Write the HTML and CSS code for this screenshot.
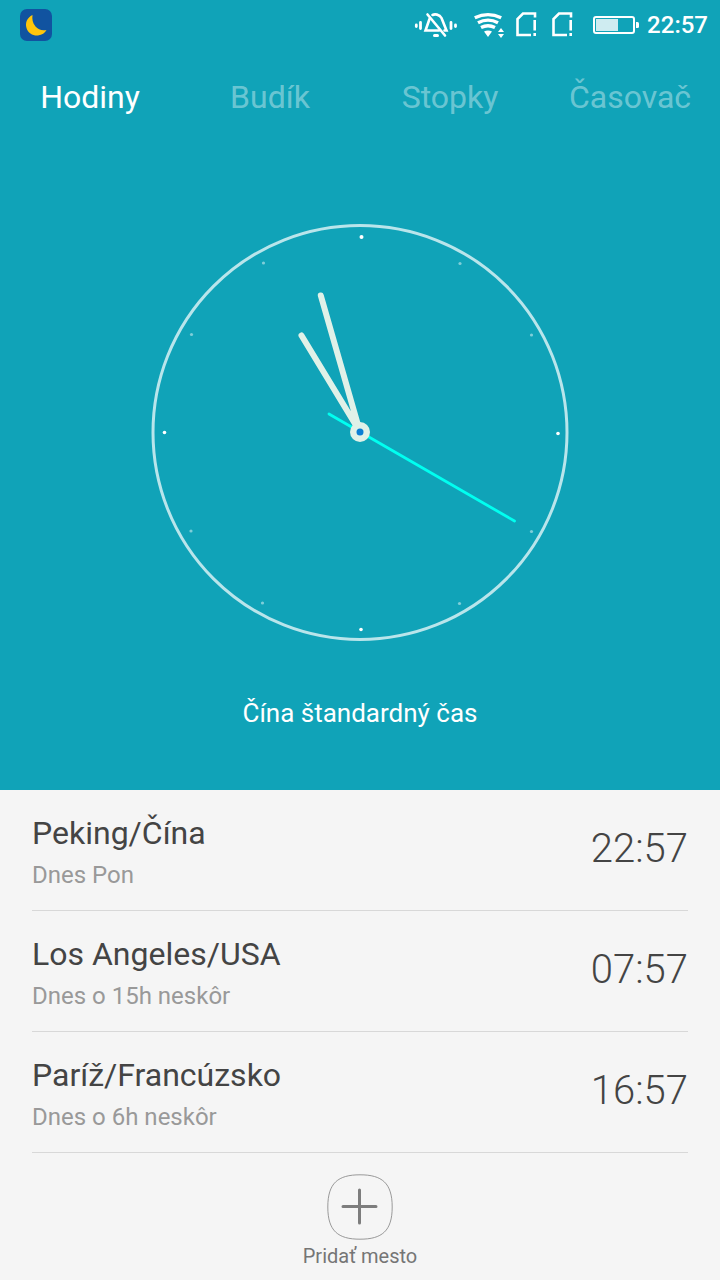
FILE: index.html
```html
<!DOCTYPE html>
<html lang="sk">
<head>
<meta charset="utf-8">
<meta name="viewport" content="width=device-width, initial-scale=1">
<title>Hodiny</title>
<link rel="stylesheet" href="styles.css">
</head>
<body>
<div class="app">
  <header class="hero">
    <div class="status">
      <svg class="status-app" width="32" height="32" viewBox="0 0 32 32" aria-hidden="true">
        <rect width="32" height="32" rx="7" fill="#1153a0"/>
        <path d="M12.500 6C7 8.500 5 14 6.500 19C8 24 13 27 18 26.500C22 26 25 24 26.500 21C22 22 18 20.500 15.500 17.500C12.500 14 12 10 12.500 6Z" fill="#ffc60b"/>
      </svg>
      <div class="status-icons">
        <svg class="silent" width="44" height="32" viewBox="414 9 44 32" fill="none" stroke="#fff" stroke-width="2.600" stroke-linecap="round" aria-hidden="true">
          <path d="M416.300 25v1.500M420.500 22.500v6M451 22.500v6M455.500 25v1.500" stroke-width="2.800"/>
          <path d="M429.500 19L425.500 30.500H439M432.500 15C434.500 14 439.500 14 441.500 18L446.500 30.500H444.500"/>
          <path d="M427.500 14.500L445 35.500"/>
          <path d="M434.500 35.500h3" stroke-width="3"/>
        </svg>
        <svg class="wifi" width="32" height="32" viewBox="473 9 32 32" fill="none" stroke="#fff" stroke-width="3.400" aria-hidden="true">
          <path d="M474.800 17.800Q488 11.500 501.200 17.800M478 22.800Q488 17.500 498 22.800M481 27.500Q488 24 495 27.500"/>
          <path d="M484 31.500Q488 29.500 492 31.500L488 37ZM501 28L504 32H498ZM501 38L504 34H498Z" fill="#fff" stroke="none"/>
        </svg>
        <svg class="sim" width="22" height="32" viewBox="515 9 22 32" fill="none" stroke="#fff" stroke-width="2.600" aria-hidden="true">
          <path d="M535 17.500V13.500H523L517.500 19V35H531M534.700 20V30.500M534.700 33V36"/>
        </svg>
        <svg class="sim" width="22" height="32" viewBox="515 9 22 32" fill="none" stroke="#fff" stroke-width="2.600" aria-hidden="true">
          <path d="M535 17.500V13.500H523L517.500 19V35H531M534.700 20V30.500M534.700 33V36"/>
        </svg>
        <svg class="battery" width="46" height="32" viewBox="593 9 46 32" aria-hidden="true">
          <rect x="594" y="17" width="40" height="16" rx="2" fill="none" stroke="#fff" stroke-width="2"/>
          <rect x="596" y="19" width="22" height="12" fill="#cfecf1"/>
          <path d="M636 22h1.500q1.500 0 1.500 1.500v3q0 1.500-1.500 1.500H636z" fill="#fff"/>
        </svg>
        <time class="status-time">22:57</time>
      </div>
    </div>
    <nav class="tabs">
      <button class="tab tab-active" type="button" aria-current="page">Hodiny</button>
      <button class="tab" type="button">Budík</button>
      <button class="tab" type="button">Stopky</button>
      <button class="tab" type="button">Časovač</button>
    </nav>
    <svg class="clock" viewBox="150 222 420 420" role="img" aria-label="22:57">
      <circle cx="360" cy="432.500" r="207" fill="none" stroke="#b9e5eb" stroke-width="3"/>
      <g fill="#fff">
        <circle cx="361.500" cy="237" r="2"/>
        <circle cx="558" cy="433.500" r="1.800"/>
        <circle cx="361" cy="629.500" r="1.800"/>
        <circle cx="164.500" cy="432.500" r="1.800"/>
      </g>
      <g fill="#7fced9">
        <circle cx="460" cy="263.500" r="1.600"/>
        <circle cx="531.500" cy="335" r="1.600"/>
        <circle cx="531.500" cy="531.500" r="1.600"/>
        <circle cx="459.500" cy="603.500" r="1.600"/>
        <circle cx="262.500" cy="603" r="1.600"/>
        <circle cx="191" cy="531" r="1.600"/>
        <circle cx="191.500" cy="334.500" r="1.600"/>
        <circle cx="263.500" cy="263" r="1.600"/>
      </g>
      <g stroke-linecap="round">
        <path d="M329 414L514.500 521" stroke="#00fff0" stroke-width="2.800"/>
        <path d="M360 432L301.500 335.500M360 432L320.800 295.500" stroke="#e0f1e8" stroke-width="6" fill="none"/>
      </g>
      <circle cx="360" cy="432" r="10" fill="#e0f1e8"/>
      <circle cx="360" cy="432" r="3.500" fill="#0b7fd4"/>
    </svg>
    <p class="zone">Čína štandardný čas</p>
  </header>
  <main class="panel">
    <ul class="cities">
      <li class="city">
        <div>
          <h2 class="city-name">Peking/Čína</h2>
          <p class="city-note">Dnes Pon</p>
        </div>
        <time class="city-time">22:57</time>
      </li>
      <li class="city">
        <div>
          <h2 class="city-name">Los Angeles/USA</h2>
          <p class="city-note">Dnes o 15h neskôr</p>
        </div>
        <time class="city-time">07:57</time>
      </li>
      <li class="city">
        <div>
          <h2 class="city-name">Paríž/Francúzsko</h2>
          <p class="city-note">Dnes o 6h neskôr</p>
        </div>
        <time class="city-time">16:57</time>
      </li>
    </ul>
    <button class="add" type="button">
      <svg width="66" height="66" viewBox="0 0 66 66" fill="none" aria-hidden="true">
        <path d="M33 .8C55 .8 65.200 9 65.200 33C65.200 57 55 65.200 33 65.200C11 65.200 .8 57 .8 33C.8 9 11 .8 33 .8Z" stroke="#999"/>
        <path d="M32.500 16V49M16 32.500H49" stroke="#7d7d7d" stroke-width="3" stroke-linecap="round"/>
      </svg>
      <span>Pridať mesto</span>
    </button>
  </main>
</div>
</body>
</html>
```
FILE: styles.css
```css
* {
  box-sizing: border-box;
}

body {
  margin: 0;
  background: #f5f5f5;
  color: #444;
  font-family: Roboto, "Noto Sans", sans-serif;
}

h2,
p,
ul {
  margin: 0;
  padding: 0;
  font-weight: 400;
}

button {
  margin: 0;
  padding: 0;
  border: 0;
  background: none;
  font: inherit;
  cursor: pointer;
}

svg {
  display: block;
}

.app {
  display: flex;
  flex-direction: column;
  min-height: 100vh;
}

.hero {
  display: flex;
  flex-direction: column;
  padding-bottom: 61px;
  background: #10a3b8;
  color: #fff;
}

.status {
  display: flex;
  align-items: center;
  justify-content: space-between;
  height: 50px;
  padding: 0 12px 0 20px;
}

.status-icons {
  display: flex;
  align-items: center;
}

.silent {
  margin-right: 15px;
}

.wifi {
  margin-right: 10px;
}

.sim {
  margin-right: 14px;
}

.battery {
  margin: 0 8px 0 6px;
}

.status-time {
  font-size: 24px;
  font-weight: 500;
  line-height: 32px;
}

.tabs {
  display: grid;
  grid-template-columns: repeat(4, 1fr);
}

.tab {
  height: 94px;
  color: rgba(255, 255, 255, 0.4);
  font-size: 32px;
  line-height: 94px;
}

.tab-active {
  color: #fff;
}

.clock {
  width: 100%;
  max-width: 420px;
  margin: 78px auto 55px;
}

.zone {
  font-size: 26px;
  line-height: 32px;
  text-align: center;
}

.panel {
  flex: 1;
  padding: 0 32px;
}

.cities {
  list-style: none;
}

.city {
  display: flex;
  align-items: center;
  justify-content: space-between;
  padding: 23px 0 19px;
  border-bottom: 1px solid #d8d8d8;
}

.city-name {
  font-size: 32px;
  line-height: 40px;
}

.city-note {
  padding-top: 6px;
  color: #999;
  font-size: 24px;
  line-height: 32px;
}

.city-time {
  padding-bottom: 6px;
  font-size: 40px;
  font-weight: 300;
  line-height: 48px;
}

.add {
  display: flex;
  flex-direction: column;
  align-items: center;
  gap: 4px;
  margin: 21px auto 0;
  color: #757575;
  font-size: 20px;
  line-height: 24px;
}
```
